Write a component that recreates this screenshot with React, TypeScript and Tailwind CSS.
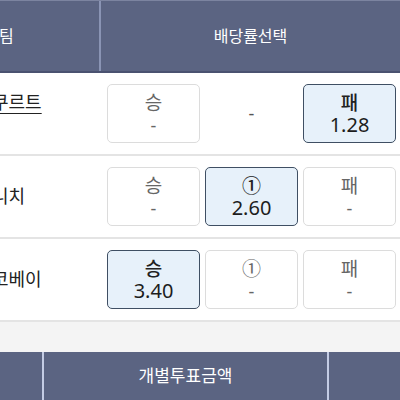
type Pick = { label: string; value: string; active?: boolean } | null

type MatchRow = {
  team: string
  underline?: boolean
  picks: Pick[]
}

const rows: MatchRow[] = [
  {
    team: '쿠르트',
    underline: true,
    picks: [{ label: '승', value: '-' }, null, { label: '패', value: '1.28', active: true }],
  },
  {
    team: '니치',
    picks: [
      { label: '승', value: '-' },
      { label: '①', value: '2.60', active: true },
      { label: '패', value: '-' },
    ],
  },
  {
    team: '코베이',
    picks: [
      { label: '승', value: '3.40', active: true },
      { label: '①', value: '-' },
      { label: '패', value: '-' },
    ],
  },
]

const font = { fontFamily: '"Noto Sans", "Noto Sans CJK KR", sans-serif' }

const PickButton = ({ pick }: { pick: Pick }) => {
  if (!pick) {
    return (
      <div className="flex h-[59px] items-center justify-center text-[18px] text-[#555]">-</div>
    )
  }
  return (
    <div
      className={
        pick.active
          ? 'flex h-[59px] flex-col items-center justify-center rounded-[5px] border border-[#3f4f63] bg-[#e7f1fa] leading-[22px]'
          : 'flex h-[59px] flex-col items-center justify-center rounded-[5px] border border-[#dcdcdc] bg-white leading-[22px]'
      }
    >
      <span
        className={
          pick.active ? 'text-[19px] font-medium text-[#222]' : 'text-[19px] text-[#666]'
        }
      >
        {pick.label}
      </span>
      <span className={pick.active ? 'text-[20px] text-[#1d1d1d]' : 'text-[18px] text-[#666]'}>
        {pick.value}
      </span>
    </div>
  )
}

export default function App() {
  return (
    <div className="h-[400px] w-[400px] overflow-hidden bg-white" style={font}>
      <div className="flex h-[73px] border-t border-[#7c84a0] border-b-2 border-b-[#4a5270] bg-[#5b6482] text-[16px] text-white">
        <div className="flex w-[101px] items-center overflow-hidden border-r-2 border-[#8a94b4]">
          <span className="-ml-[1px]">팀</span>
        </div>
        <div className="flex flex-1 items-center justify-center">배당률선택</div>
      </div>

      {rows.map((row, i) => (
        <div
          key={i}
          className="flex h-[83px] items-center border-b-2 border-[#e4e4e4] bg-white"
        >
          <div className="w-[102px] self-stretch overflow-hidden">
            <div
              className={
                i === 0
                  ? 'flex h-full items-start pt-[16px]'
                  : 'flex h-full items-center'
              }
            >
              <span
                className={
                  row.underline
                    ? '-ml-[8px] whitespace-nowrap text-[18px] text-[#222] underline underline-offset-[4px]'
                    : '-ml-[8px] whitespace-nowrap text-[18px] text-[#222]'
                }
              >
                {row.team}
              </span>
            </div>
          </div>
          <div className="grid flex-1 grid-cols-3 gap-[5px] pl-[5px] pr-[4px]">
            {row.picks.map((p, j) => (
              <PickButton key={j} pick={p} />
            ))}
          </div>
        </div>
      ))}

      <div className="h-[30px] bg-[#f4f4f4]" />

      <div className="flex h-[48px] bg-[#5b6482] text-[17px] text-white">
        <div className="w-[44px] border-r-2 border-[#c4cce4]" />
        <div className="flex w-[285px] items-center justify-center border-r-2 border-[#c4cce4]">
          개별투표금액
        </div>
        <div className="flex-1" />
      </div>
    </div>
  )
}
